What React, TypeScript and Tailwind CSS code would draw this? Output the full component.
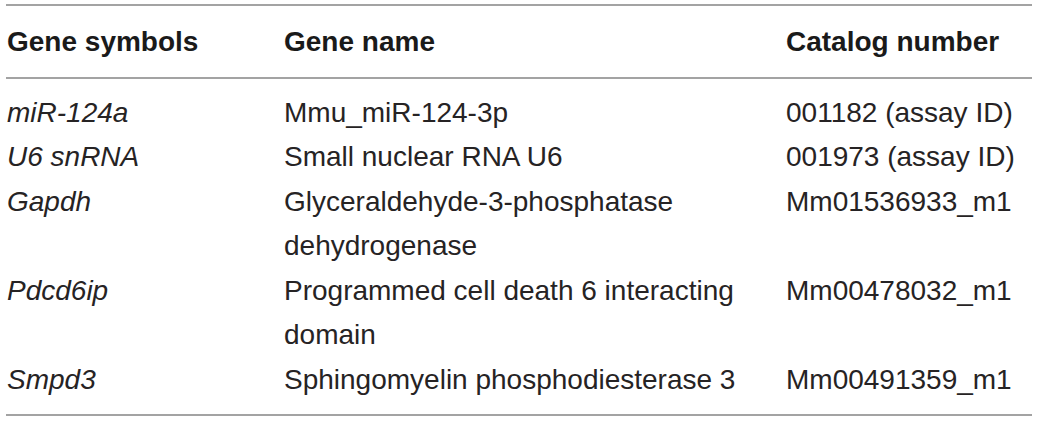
const rows = [
  { symbol: 'miR-124a', name: ['Mmu_miR-124-3p'], catalog: '001182 (assay ID)' },
  { symbol: 'U6 snRNA', name: ['Small nuclear RNA U6'], catalog: '001973 (assay ID)' },
  { symbol: 'Gapdh', name: ['Glyceraldehyde-3-phosphatase', 'dehydrogenase'], catalog: 'Mm01536933_m1' },
  { symbol: 'Pdcd6ip', name: ['Programmed cell death 6 interacting', 'domain'], catalog: 'Mm00478032_m1' },
  { symbol: 'Smpd3', name: ['Sphingomyelin phosphodiesterase 3'], catalog: 'Mm00491359_m1' },
];

export default function App() {
  return (
    <div className="w-[1040px] h-[422px] bg-white pt-[4px] pl-[6px] font-['Liberation_Sans',Arial,sans-serif] text-[28px] leading-[44.5px] text-[#262324]">
      <div className="w-[1026px] border-t-2 border-b-2 border-[#a3a3a3]">
        {/* Header */}
        <div className="grid grid-cols-[278px_502px_1fr] pt-[14px] pb-[12px] border-b-2 border-[#a3a3a3] font-bold text-[#1a1a1a]">
          <div className="pl-px">Gene symbols</div>
          <div>Gene name</div>
          <div>Catalog number</div>
        </div>

        {/* Body */}
        <div className="pt-[12px] pb-[12px]">
          {rows.map((r) => (
            <div key={r.symbol} className="grid grid-cols-[278px_502px_1fr]">
              <div className="pl-px italic">{r.symbol}</div>
              <div>
                {r.name.map((line) => (
                  <div key={line}>{line}</div>
                ))}
              </div>
              <div>{r.catalog}</div>
            </div>
          ))}
        </div>
      </div>
    </div>
  );
}
